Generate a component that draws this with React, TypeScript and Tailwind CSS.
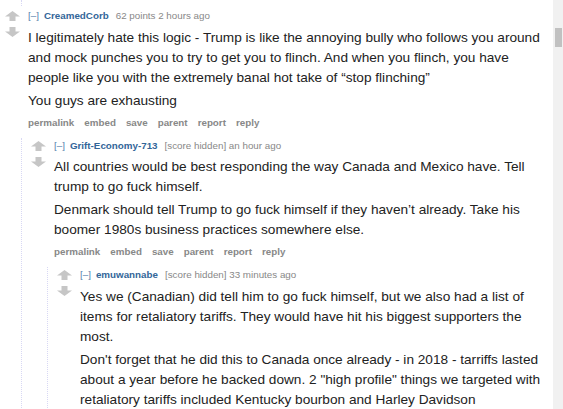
import React from "react";

const Up = () => (
  <svg width="15" height="10" viewBox="0 0 15 10" className="block">
    <polygon points="7.5,0 15,5.5 10.5,5.5 10.5,10 4.5,10 4.5,5.5 0,5.5" fill="#c6c6c6" />
  </svg>
);
const Down = () => (
  <svg width="15" height="10" viewBox="0 0 15 10" className="block">
    <polygon points="4.5,0 10.5,0 10.5,4.5 15,4.5 7.5,10 0,4.5 4.5,4.5" fill="#c6c6c6" />
  </svg>
);

type C = {
  author: string;
  meta: string;
  paras: string[];
  buttons?: boolean;
  child?: React.ReactNode;
};

function Comment({ author, meta, paras, buttons = true, child }: C) {
  return (
    <div className="flex flex-col">
      <div className="flex">
        <div className="w-[15px] shrink-0 pt-[3px] flex flex-col gap-[6px]">
          <Up />
          <Down />
        </div>
        <div className="ml-[8px] flex-1 min-w-0">
          <div className="h-[16px] leading-[16px] text-[9.8px] whitespace-nowrap">
            <span className="text-[#5a82ad]">[–]</span>
            <span className="ml-[5px] font-bold text-[#336699]">{author}</span>
            <span className="ml-[7px] text-[#888]">{meta}</span>
          </div>
          <div className="mt-[3.5px] text-[13.65px] leading-[20px] text-[#222] flex flex-col gap-[3px]">
            {paras.map((p, i) => (
              <p key={i}>{p}</p>
            ))}
          </div>
          {buttons && (
            <div className="mt-[4px] h-[16px] leading-[16px] text-[9.8px] font-bold text-[#888] flex gap-[10px]">
              <span>permalink</span>
              <span>embed</span>
              <span>save</span>
              <span>parent</span>
              <span>report</span>
              <span>reply</span>
            </div>
          )}
        </div>
      </div>
      {child && (
        <div className="mt-[7px] ml-[16px] border-l border-dotted border-[#d8d8f4] pl-[9px]">
          {child}
        </div>
      )}
    </div>
  );
}

export default function App() {
  return (
    <div className="w-[563px] h-[409px] overflow-hidden bg-white flex font-['Liberation_Sans',Arial,sans-serif]">
      <div className="flex-1 min-w-0 pl-[5px] pr-[4px]">
        <div className="ml-[16px] h-[6px] border-l border-dotted border-[#d8d8f4]" />
        <div className="mt-[2px]">
          <Comment
            author="CreamedCorb"
            meta="62 points 2 hours ago"
            paras={[
              "I legitimately hate this logic - Trump is like the annoying bully who follows you around and mock punches you to try to get you to flinch. And when you flinch, you have people like you with the extremely banal hot take of “stop flinching”",
              "You guys are exhausting",
            ]}
            child={
              <Comment
                author="Grift-Economy-713"
                meta="[score hidden] an hour ago"
                paras={[
                  "All countries would be best responding the way Canada and Mexico have. Tell trump to go fuck himself.",
                  "Denmark should tell Trump to go fuck himself if they haven’t already. Take his boomer 1980s business practices somewhere else.",
                ]}
                child={
                  <Comment
                    author="emuwannabe"
                    meta="[score hidden] 33 minutes ago"
                    buttons={false}
                    paras={[
                      "Yes we (Canadian) did tell him to go fuck himself, but we also had a list of items for retaliatory tariffs. They would have hit his biggest supporters the most.",
                      "Don't forget that he did this to Canada once already - in 2018 - tarriffs lasted about a year before he backed down. 2 \"high profile\" things we targeted with retaliatory tariffs included Kentucky bourbon and Harley Davidson",
                    ]}
                  />
                }
              />
            }
          />
        </div>
      </div>
      <div className="w-[10px] shrink-0 bg-[#f1f1f1] pt-[28px] pl-[2px]">
        <div className="w-[7px] h-[19px] bg-[#c1c1c1]" />
      </div>
    </div>
  );
}
